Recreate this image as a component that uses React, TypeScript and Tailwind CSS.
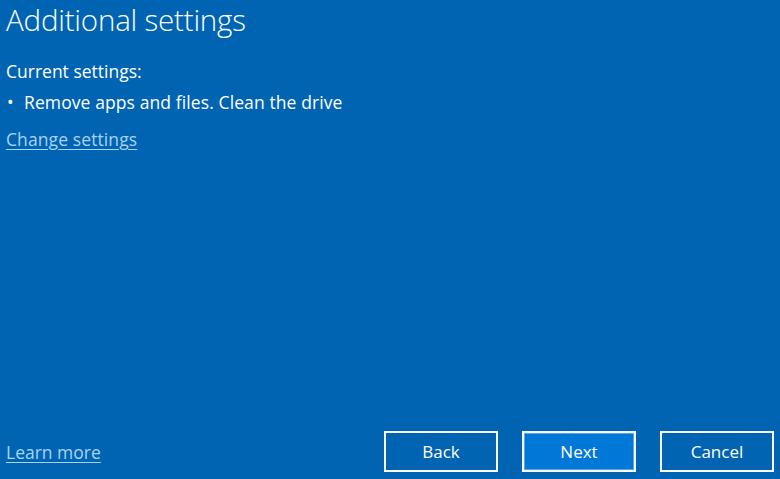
import React from "react";

export default function App() {
  return (
    <div
      className="w-[780px] h-[479px] bg-[#0064b2] text-white flex flex-col overflow-hidden"
      style={{ fontFamily: '"Open Sans", "Noto Sans", sans-serif' }}
    >
      <div className="px-[6px] pt-[1px]">
        <h1 className="text-[29.5px] font-light leading-[38px] tracking-[-0.2px]">Additional settings</h1>
        <div className="mt-[20px] text-[17.5px] leading-[24px]">Current settings:</div>
        <div className="mt-[7px] text-[17.5px] leading-[24px] flex">
          <span className="w-[18px] pl-[1px]">•</span>
          <span className="tracking-[0.1px]">Remove apps and files. Clean the drive</span>
        </div>
        <div className="mt-[13px] text-[17.5px] leading-[24px]">
          <a className="text-[#a9d3f5] underline underline-offset-[3px] tracking-[0.1px]">Change settings</a>
        </div>
      </div>
      <div className="mt-auto flex items-center pl-[6px] pr-[6px] pb-[7px]">
        <a className="text-[17.5px] leading-[24px] text-[#a9d3f5] underline underline-offset-[3px]">Learn more</a>
        <div className="ml-auto flex gap-[24px]">
          <button className="w-[114px] h-[41px] border-2 border-white bg-[#0064b2] text-[17px]">Back</button>
          <button className="w-[114px] h-[41px] border-2 border-white bg-[#0078d7] text-[17px] shadow-[inset_0_0_0_1px_#5aa7e6]">Next</button>
          <button className="w-[114px] h-[41px] border-2 border-white bg-[#0064b2] text-[17px]">Cancel</button>
        </div>
      </div>
    </div>
  );
}
